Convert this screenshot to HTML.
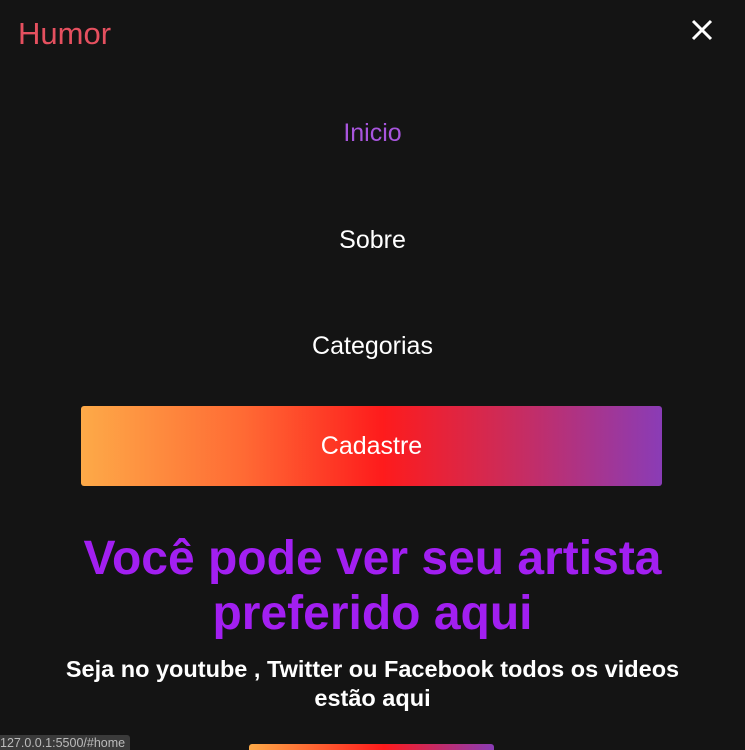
<!DOCTYPE html>
<html><head><style>
html,body{margin:0;padding:0;background:#141414;width:745px;height:750px;overflow:hidden;font-family:"Liberation Sans",Arial,sans-serif;position:relative}
.logo{position:absolute;left:18px;top:16px;font-size:31px;color:#e5505f}
.x{position:absolute;left:690px;top:18px}
.nav{position:absolute;left:0;width:745px;text-align:center;font-size:25px;color:#fff}
.btn{position:absolute;left:81px;top:406px;width:581px;height:80px;border-radius:3px;background:linear-gradient(90deg,#fdaa48 0%,#ff6a34 28%,#fe1b1c 52%,#d02a55 72%,#8a3cb6 100%);color:#fff;font-size:25px;text-align:center;line-height:80px}
h1{position:absolute;top:531px;left:0;width:745px;margin:0;text-align:center;color:#a21ff1;font-size:48px;line-height:55px;font-weight:bold}
p{position:absolute;top:655px;left:40px;width:665px;margin:0;text-align:center;color:#fff;font-weight:bold;font-size:23.5px;line-height:29px}
.b2{position:absolute;left:249px;top:744px;width:245px;height:20px;border-radius:3px;background:linear-gradient(90deg,#fdaa48,#fe1b1c 55%,#8a3cb6)}
.st{position:absolute;left:0;top:735px;height:15px;padding:0 5px 0 0;background:#3a3a3a;color:#bbb;font-size:12.5px;line-height:17px;border-top-right-radius:3px}
</style></head><body>
<div class="logo">Humor</div>
<svg class="x" width="24" height="24" viewBox="0 0 24 24"><path d="M3 3L21 21M21 3L3 21" stroke="#fff" stroke-width="3"/></svg>
<div class="nav" style="top:119px;color:#a855dd">Inicio</div>
<div class="nav" style="top:226px">Sobre</div>
<div class="nav" style="top:332px">Categorias</div>
<div class="btn">Cadastre</div>
<h1>Você pode ver seu artista<br>preferido aqui</h1>
<p>Seja no youtube , Twitter ou Facebook todos os videos<br>estão aqui</p>
<div class="b2"></div>
<div class="st">127.0.0.1:5500/#home</div>
</body></html>
